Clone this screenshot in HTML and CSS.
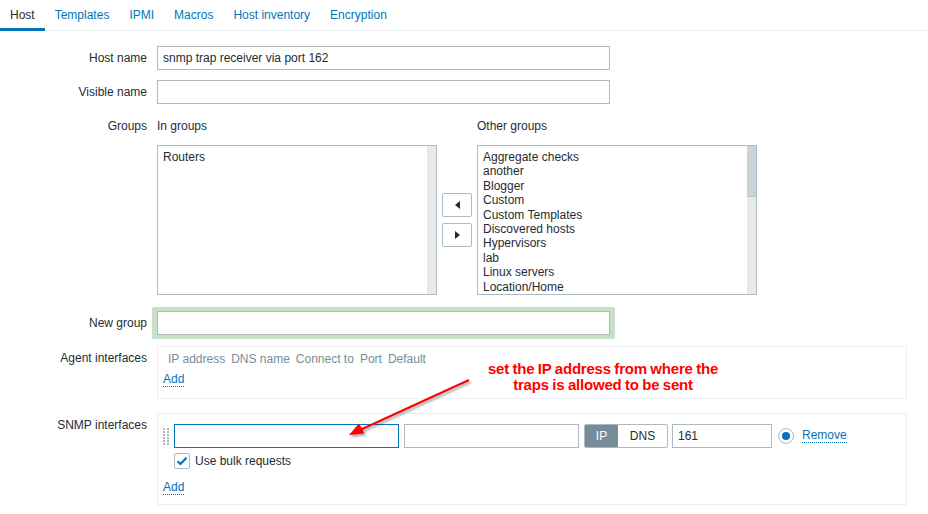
FILE: index.html
```html
<!DOCTYPE html>
<html>
<head>
<meta charset="utf-8">
<link rel="stylesheet" href="styles.css">
</head>
<body>
<div class="page">
  <nav class="tabs">
    <span class="tab active">Host</span>
    <span class="tab">Templates</span>
    <span class="tab">IPMI</span>
    <span class="tab">Macros</span>
    <span class="tab">Host inventory</span>
    <span class="tab">Encryption</span>
  </nav>

  <form class="form">
    <div class="row r-host">
      <label class="lbl">Host name</label>
      <div class="field"><div class="input w-long">snmp trap receiver via port 162</div></div>
    </div>
    <div class="row r-visible">
      <label class="lbl">Visible name</label>
      <div class="field"><div class="input w-long"></div></div>
    </div>
    <div class="row r-groups">
      <label class="lbl lbl-top">Groups</label>
      <div class="groups">
        <div class="gcol">
          <div class="ghead">In groups</div>
          <div class="listbox">
            <div class="items"><div>Routers</div></div>
            <div class="track"></div>
          </div>
        </div>
        <div class="movers">
          <button type="button" class="mv"><span class="tri-l"></span></button>
          <button type="button" class="mv"><span class="tri-r"></span></button>
        </div>
        <div class="gcol">
          <div class="ghead">Other groups</div>
          <div class="listbox">
            <div class="items">
              <div>Aggregate checks</div>
              <div>another</div>
              <div>Blogger</div>
              <div>Custom</div>
              <div>Custom Templates</div>
              <div>Discovered hosts</div>
              <div>Hypervisors</div>
              <div>lab</div>
              <div>Linux servers</div>
              <div>Location/Home</div>
            </div>
            <div class="track"><div class="thumb"></div></div>
          </div>
        </div>
      </div>
    </div>
    <div class="row r-new">
      <label class="lbl lbl-new">New group</label>
      <div class="field"><div class="green"><div class="input w-long"></div></div></div>
    </div>
    <div class="row r-agent">
      <label class="lbl lbl-box">Agent interfaces</label>
      <div class="box agent">
        <div class="ahead">
          <span>IP address</span><span>DNS name</span><span>Connect to</span><span>Port</span><span>Default</span>
        </div>
        <a class="link">Add</a>
      </div>
    </div>
    <div class="row r-snmp">
      <label class="lbl lbl-box">SNMP interfaces</label>
      <div class="box snmp">
        <div class="srow">
          <span class="handle"><i></i><i></i><i></i><i></i><i></i><i></i><i></i><i></i><i></i><i></i><i></i><i></i></span>
          <div class="input w-ip focus"></div>
          <div class="input w-dns"></div>
          <div class="seg"><span class="on">IP</span><span class="off">DNS</span></div>
          <div class="input w-port">161</div>
          <span class="radio"><span class="dot"></span></span>
          <a class="link remove">Remove</a>
        </div>
        <div class="bulk">
          <span class="cb"><svg width="12" height="10" viewBox="0 0 12 10"><path d="M1.5 5.2 L4.5 8 L10.5 1.8" fill="none" stroke="#0275b8" stroke-width="2.2"/></svg></span>
          <span>Use bulk requests</span>
        </div>
        <a class="link add2">Add</a>
      </div>
    </div>
  </form>

  <div class="note">set the IP address from where the<br>traps is allowed to be sent</div>
  <svg class="arrow" width="928" height="514" viewBox="0 0 928 514">
    <defs>
      <filter id="sh" x="-20%" y="-20%" width="140%" height="140%">
        <feDropShadow dx="1.5" dy="2" stdDeviation="1.2" flood-color="#000" flood-opacity="0.35"/>
      </filter>
    </defs>
    <g filter="url(#sh)">
      <line x1="469" y1="380" x2="360" y2="430" stroke="#ff0000" stroke-width="2"/>
      <polygon points="349,435 364.5,433.5 359,423.5" fill="#ff0000"/>
    </g>
  </svg>
</div>
</body>
</html>
```

FILE: styles.css
```css
* { box-sizing: border-box; }
html, body { margin: 0; padding: 0; background: #fff; }
body {
  font-family: "Liberation Sans", Arial, sans-serif;
  font-size: 12px;
  color: #1f2c33;
}
.page { position: relative; width: 928px; height: 514px; overflow: hidden; }

.tabs {
  display: flex;
  height: 31px;
  border-bottom: 1px solid #ebeef0;
}
.tab {
  padding: 1px 10px 0;
  line-height: 28px;
  height: 31px;
  color: #0275b8;
}
.tab.active {
  color: #1f2c33;
  border-bottom: 3px solid #0275b8;
}

.form { margin: 0; }
.row {
  display: grid;
  grid-template-columns: 147px 1fr;
  column-gap: 10px;
}
.lbl {
  text-align: right;
  line-height: 24px;
  white-space: nowrap;
}
.lbl-top { line-height: 14px; }
.lbl-new { line-height: 32px; }
.lbl-box { line-height: 14px; padding-top: 5px; }

.r-host { margin-top: 15px; }
.r-visible { margin-top: 10px; }
.r-groups { margin-top: 15px; }
.r-new { margin-top: 12px; }
.r-agent { margin-top: 7px; }
.r-snmp { margin-top: 14px; }

.input {
  height: 24px;
  border: 1px solid #acbbc2;
  background: #fff;
  padding: 0 5px;
  line-height: 22px;
  white-space: nowrap;
}
.input.focus { border-color: #0275b8; }
.w-long { width: 453px; }
.w-ip { width: 225px; }
.w-dns { width: 175px; }
.w-port { width: 100px; }

.groups { display: flex; align-items: flex-start; }
.gcol { display: flex; flex-direction: column; }
.ghead { line-height: 14px; height: 14px; margin-bottom: 12px; }
.listbox {
  display: flex;
  width: 280px;
  height: 150px;
  border: 1px solid #acbbc2;
  background: #fff;
}
.items {
  flex: 1;
  padding: 4px 5px 0;
  line-height: 14.4px;
  overflow: hidden;
}
.track {
  width: 9px;
  background: #e9e9e9;
}
.thumb {
  height: 51px;
  background: #c9d3d8;
  border-bottom: 1px solid #b9c6cc;
}
.movers {
  display: flex;
  flex-direction: column;
  gap: 6px;
  margin: 74px 5px 0 5px;
}
.mv {
  width: 30px;
  height: 24px;
  border: 1px solid #acbbc2;
  border-radius: 2px;
  background: #fff;
  padding: 0;
  display: flex;
  align-items: center;
  justify-content: center;
}
.tri-l, .tri-r { width: 0; height: 0; border-top: 4px solid transparent; border-bottom: 4px solid transparent; }
.tri-l { border-right: 5px solid #1f2c33; }
.tri-r { border-left: 5px solid #1f2c33; }

.green {
  width: 463px;
  height: 32px;
  margin-left: -5px;
  padding: 4px 5px;
  background: #c5e2c7;
  border-radius: 2px;
}

.box {
  width: 750px;
  border: 1px solid #ebeef0;
  background: #fff;
}
.agent { height: 53px; padding: 4px 5px 0; }
.ahead {
  display: flex;
  gap: 6px;
  color: #768d99;
  padding-left: 5px;
  line-height: 14px;
  padding-top: 1px;
}
.link {
  color: #0275b8;
  border-bottom: 1px dotted #0275b8;
  display: inline-block;
  line-height: 13px;
}
.agent .link { margin-top: 7px; }

.snmp { height: 92px; padding: 10px 5px 0; }
.srow { display: flex; align-items: center; height: 24px; }
.handle {
  display: grid;
  grid-template-columns: 2px 2px;
  column-gap: 2px;
  row-gap: 1px;
  margin-right: 5px;
  padding-top: 1px;
  width: 6px;
}
.handle i { display: block; width: 2px; height: 2px; background: #acbbc2; }
.srow .w-dns { margin-left: 5px; }
.seg {
  display: flex;
  margin-left: 5px;
  width: 84px;
  height: 24px;
  border: 1px solid #acbbc2;
  border-radius: 2px;
  overflow: hidden;
}
.seg span { line-height: 22px; text-align: center; }
.seg .on { background: #768d99; color: #fff; width: 33px; }
.seg .off { flex: 1; }
.srow .w-port { margin-left: 4px; }
.radio {
  margin-left: 6px;
  width: 16px;
  height: 16px;
  border: 1px solid #acbbc2;
  border-radius: 50%;
  display: flex;
  align-items: center;
  justify-content: center;
  background: #fff;
}
.dot { width: 8px; height: 8px; border-radius: 50%; background: #0275b8; }
.remove { margin-left: 8px; }

.bulk {
  display: flex;
  align-items: center;
  margin-top: 5px;
  margin-left: 11px;
  height: 16px;
}
.cb {
  width: 16px;
  height: 16px;
  border: 1px solid #acbbc2;
  border-radius: 2px;
  display: flex;
  align-items: center;
  justify-content: center;
  margin-right: 5px;
}
.add2 { margin-top: 12px; }

.note {
  position: absolute;
  left: 463px;
  top: 361px;
  width: 280px;
  text-align: center;
  color: #ff0000;
  font-weight: bold;
  font-size: 15px;
  line-height: 16px;
  letter-spacing: -0.2px;
  word-spacing: -0.5px;
}
.arrow { position: absolute; left: 0; top: 0; pointer-events: none; }
```
